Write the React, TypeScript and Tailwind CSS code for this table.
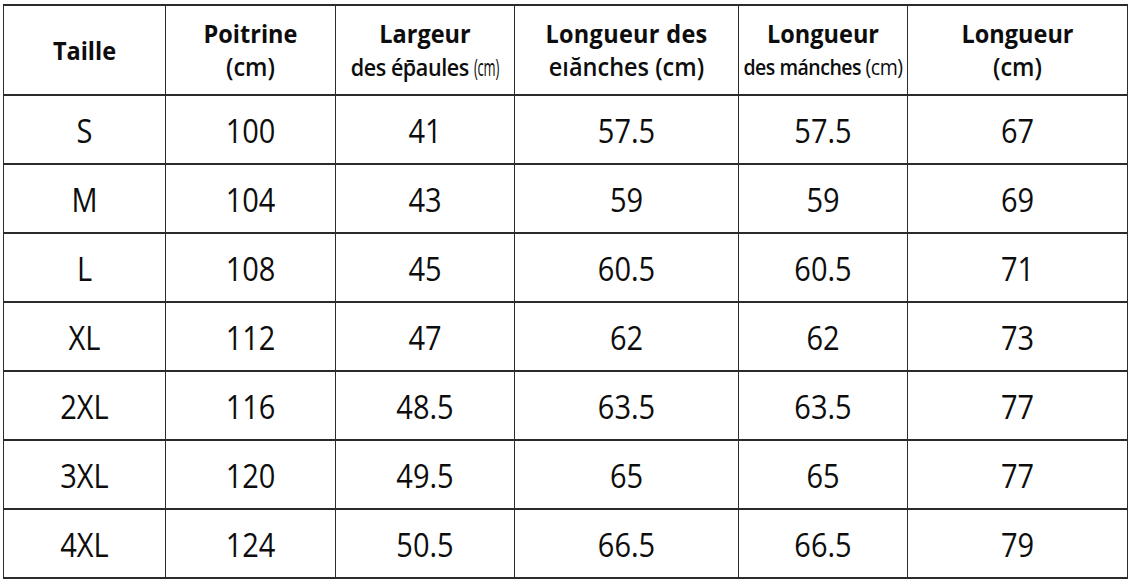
import React from "react";

const rows = [
  ["S", "100", "41", "57.5", "57.5", "67"],
  ["M", "104", "43", "59", "59", "69"],
  ["L", "108", "45", "60.5", "60.5", "71"],
  ["XL", "112", "47", "62", "62", "73"],
  ["2XL", "116", "48.5", "63.5", "63.5", "77"],
  ["3XL", "120", "49.5", "65", "65", "77"],
  ["4XL", "124", "50.5", "66.5", "66.5", "79"],
];

const widths = ["w-[162px]", "w-[170px]", "w-[179px]", "w-[224px]", "w-[169px]", "w-[220px]"];

const th = "border-2 border-[#2b2b2b] border-x-[1.5px] font-bold text-center align-middle";

export default function App() {
  return (
    <div className="w-[1131px] h-[581px] bg-white pl-[3px] pt-[4px]" style={{ fontFamily: '"Open Sans", "Noto Sans", sans-serif' }}>
      <table className="border-collapse table-fixed w-[1125px] text-[#0d0d0d]">
        <colgroup>
          {widths.map((w, i) => (
            <col key={i} className={w} />
          ))}
        </colgroup>
        <thead>
          <tr className="h-[90px]">
            <th className={th}>
              <div className="text-[23.5px] leading-[34px] scale-y-[1.1]">Taille</div>
            </th>
            <th className={th}>
              <div className="text-[23.5px] leading-[33px] scale-y-[1.1]">Poitrine</div>
              <div className="text-[23.5px] leading-[33px] scale-y-[1.1] font-semibold">(cm)</div>
            </th>
            <th className={th}>
              <div className="text-[23.5px] leading-[33px] scale-y-[1.1]">Largeur</div>
              <div className="text-[21.5px] leading-[33px] tracking-[-0.4px] scale-y-[1.1] whitespace-nowrap font-semibold">
                des ép̄aules{" "}
                <span className="inline-block text-[21px] font-normal scale-x-[0.62] origin-left -mr-[15px]">(cm)</span>
              </div>
            </th>
            <th className={th}>
              <div className="text-[23.5px] leading-[33px] scale-y-[1.1] tracking-[0.3px] whitespace-nowrap">Longueur des</div>
              <div className="text-[23.5px] leading-[33px] scale-y-[1.1] whitespace-nowrap font-semibold">eıănches (cm)</div>
            </th>
            <th className={th}>
              <div className="text-[23.5px] leading-[33px] scale-y-[1.1]">Longueur</div>
              <div className="text-[19.5px] leading-[33px] tracking-[-0.5px] scale-y-[1.1] whitespace-nowrap font-semibold">
                des mánches <span className="font-medium">(cm)</span>
              </div>
            </th>
            <th className={th}>
              <div className="text-[23.5px] leading-[33px] scale-y-[1.1]">Longueur</div>
              <div className="text-[23.5px] leading-[33px] scale-y-[1.1] font-semibold">(cm)</div>
            </th>
          </tr>
        </thead>
        <tbody>
          {rows.map((r, i) => (
            <tr key={i} className="h-[69px]">
              {r.map((c, j) => (
                <td
                  key={j}
                  className="border-2 border-[#2b2b2b] border-x-[1.5px] text-center align-middle text-[29px] leading-none font-medium"
                >
                  <span className="inline-block scale-y-[1.15]">{c}</span>
                </td>
              ))}
            </tr>
          ))}
        </tbody>
      </table>
    </div>
  );
}
